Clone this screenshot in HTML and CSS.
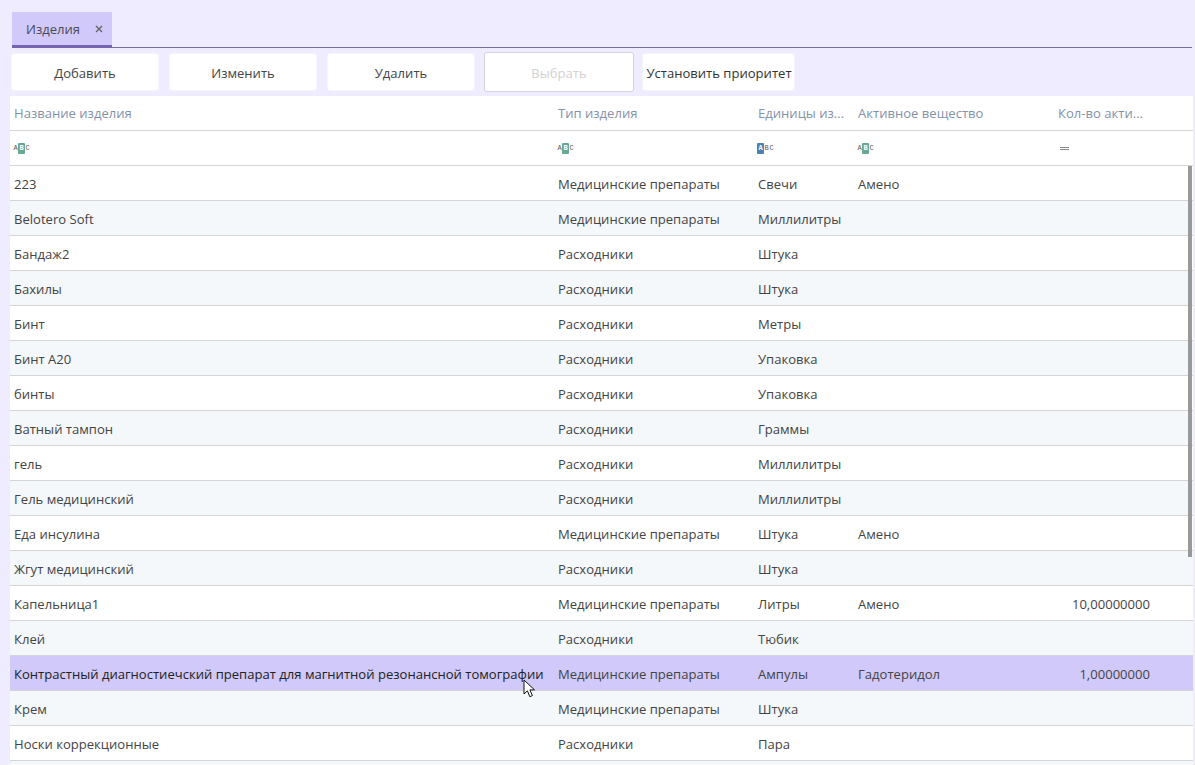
FILE: index.html
```html
<!DOCTYPE html>
<html>
<head>
  <meta charset="utf-8">
  <link rel="stylesheet" href="styles.css">
</head>
<body>
  <div class="tabs">
    <div class="tab">
      <span>Изделия</span>
      <svg class="tab-close" width="8" height="8" viewBox="0 0 8 8"><path d="M1 1l6 6M7 1l-6 6"/></svg>
    </div>
  </div>

  <div class="toolbar">
    <button class="btn">Добавить</button>
    <button class="btn">Изменить</button>
    <button class="btn">Удалить</button>
    <button class="btn btn-disabled">Выбрать</button>
    <button class="btn btn-wide">Установить приоритет</button>
  </div>

  <div class="grid">
    <div class="row head">
      <div class="cell">Название изделия</div>
      <div class="cell">Тип изделия</div>
      <div class="cell">Единицы из...</div>
      <div class="cell">Активное вещество</div>
      <div class="cell">Кол-во акти...</div>
    </div>
    <div class="row filter">
      <div class="cell"><span class="abc"><i>A</i><b class="green">B</b><i>C</i></span></div>
      <div class="cell"><span class="abc"><i>A</i><b class="green">B</b><i>C</i></span></div>
      <div class="cell"><span class="abc"><b class="blue">A</b><i>B</i><i>C</i></span></div>
      <div class="cell"><span class="abc"><i>A</i><b class="green">B</b><i>C</i></span></div>
      <div class="cell"><span class="equals"></span></div>
    </div>

    <div class="row"><div class="cell">223</div><div class="cell">Медицинские препараты</div><div class="cell">Свечи</div><div class="cell">Амено</div><div class="cell num"></div></div>
    <div class="row"><div class="cell">Belotero Soft</div><div class="cell">Медицинские препараты</div><div class="cell">Миллилитры</div><div class="cell"></div><div class="cell num"></div></div>
    <div class="row"><div class="cell">Бандаж2</div><div class="cell">Расходники</div><div class="cell">Штука</div><div class="cell"></div><div class="cell num"></div></div>
    <div class="row"><div class="cell">Бахилы</div><div class="cell">Расходники</div><div class="cell">Штука</div><div class="cell"></div><div class="cell num"></div></div>
    <div class="row"><div class="cell">Бинт</div><div class="cell">Расходники</div><div class="cell">Метры</div><div class="cell"></div><div class="cell num"></div></div>
    <div class="row"><div class="cell">Бинт А20</div><div class="cell">Расходники</div><div class="cell">Упаковка</div><div class="cell"></div><div class="cell num"></div></div>
    <div class="row"><div class="cell">бинты</div><div class="cell">Расходники</div><div class="cell">Упаковка</div><div class="cell"></div><div class="cell num"></div></div>
    <div class="row"><div class="cell">Ватный тампон</div><div class="cell">Расходники</div><div class="cell">Граммы</div><div class="cell"></div><div class="cell num"></div></div>
    <div class="row"><div class="cell">гель</div><div class="cell">Расходники</div><div class="cell">Миллилитры</div><div class="cell"></div><div class="cell num"></div></div>
    <div class="row"><div class="cell">Гель медицинский</div><div class="cell">Расходники</div><div class="cell">Миллилитры</div><div class="cell"></div><div class="cell num"></div></div>
    <div class="row"><div class="cell">Еда инсулина</div><div class="cell">Медицинские препараты</div><div class="cell">Штука</div><div class="cell">Амено</div><div class="cell num"></div></div>
    <div class="row"><div class="cell">Жгут медицинский</div><div class="cell">Расходники</div><div class="cell">Штука</div><div class="cell"></div><div class="cell num"></div></div>
    <div class="row"><div class="cell">Капельница1</div><div class="cell">Медицинские препараты</div><div class="cell">Литры</div><div class="cell">Амено</div><div class="cell num">10,00000000</div></div>
    <div class="row"><div class="cell">Клей</div><div class="cell">Расходники</div><div class="cell">Тюбик</div><div class="cell"></div><div class="cell num"></div></div>
    <div class="row selected"><div class="cell name-dark">Контрастный диагностиечский препарат для магнитной резонансной томографии</div><div class="cell">Медицинские препараты</div><div class="cell">Ампулы</div><div class="cell">Гадотеридол</div><div class="cell num">1,00000000</div></div>
    <div class="row"><div class="cell">Крем</div><div class="cell">Медицинские препараты</div><div class="cell">Штука</div><div class="cell"></div><div class="cell num"></div></div>
    <div class="row"><div class="cell">Носки коррекционные</div><div class="cell">Расходники</div><div class="cell">Пара</div><div class="cell"></div><div class="cell num"></div></div>
    <div class="row"><div class="cell"></div><div class="cell"></div><div class="cell"></div><div class="cell"></div><div class="cell num"></div></div>

    <div class="scrollbar"></div>
  </div>

  <svg class="cursor" width="14" height="20" viewBox="0 0 14 20">
    <path d="M1 1v14l3.4-3.2 2.4 5.9 2.6-1.1-2.5-5.7h4.6z" fill="#fff" stroke="#111" stroke-width="1"/>
  </svg>
</body>
</html>
```

FILE: styles.css
```css
html, body {
  height: 100%;
}

body {
  margin: 0;
  height: 765px;
  overflow: hidden;
  position: relative;
  background-color: #eeecfe;
  font-family: "Open Sans", "Noto Sans", sans-serif;
  font-size: 13.07px;
  color: #444;
}

.tabs {
  margin: 12px 3px 0 12px;
  height: 36px;
  box-sizing: border-box;
  border-bottom: 1px solid #7a6ca8;
  display: flex;
}

.tab {
  width: 100px;
  height: 36px;
  box-sizing: border-box;
  padding: 1px 9px 0 14px;
  background-color: #d0c9fa;
  border-bottom: 3px solid #7564ae;
  display: flex;
  align-items: center;
  justify-content: space-between;
  color: #4a4a55;
}

.tab-close path {
  stroke: #666;
  stroke-width: 1.4;
  fill: none;
}

.toolbar {
  display: flex;
  margin: 5px 0 0 11px;
  height: 38px;
}

.btn {
  width: 148px;
  height: 38px;
  margin-right: 10px;
  padding: 1px 0 0;
  border: 1px solid #f6f5fe;
  border-radius: 3px;
  background-color: #fff;
  font-family: inherit;
  font-size: 13.07px;
  color: #444;
}

.btn-disabled {
  width: 150px;
  height: 40px;
  margin: -1px 8px 0 -1px;
  border-color: #d4d2de;
  color: #d2d2d2;
}

.btn-wide {
  width: 153px;
  margin-right: 0;
  padding-left: 1px;
  color: #333;
}

.grid {
  position: relative;
  margin: 5px 2px 0 10px;
  background-color: #fff;
}

.row {
  display: grid;
  grid-template-columns: 544px 200px 100px 200px 100px 1fr;
  height: 35px;
  box-sizing: border-box;
  border-bottom: 1px solid #d5d5d5;
  align-items: center;
}

.row:nth-child(even) {
  background-color: #f4f8fb;
}

.row.head,
.row.filter {
  background-color: #fff;
}

.head {
  color: #8492a9;
}

.row.selected {
  background-color: #d0c9fa;
}

.name-dark {
  color: #222;
}

.cell {
  padding: 2px 4px 0;
  white-space: nowrap;
}

.head .cell {
  padding-top: 0;
}

.filter .cell {
  padding-top: 0;
}

.num {
  text-align: right;
}

.abc {
  display: flex;
  align-items: center;
  height: 10px;
  margin-left: -1px;
  font-family: "Liberation Mono", monospace;
  font-size: 7px;
  line-height: 10px;
}

.abc i {
  font-style: normal;
  width: 5px;
  text-align: center;
  color: #555;
}

.abc b {
  width: 7px;
  height: 11px;
  text-align: center;
  color: #fff;
  border-radius: 1px;
}

.abc .green {
  background-color: #68a896;
}

.abc .blue {
  background-color: #4c80b8;
}

.equals {
  display: block;
  width: 9px;
  height: 1px;
  margin-left: 2px;
  border-top: 1px solid #888;
  border-bottom: 1px solid #888;
}

.scrollbar {
  position: absolute;
  left: 1178px;
  top: 70px;
  width: 4px;
  height: 391px;
  background-color: #999;
}

.cursor {
  position: absolute;
  left: 523px;
  top: 679px;
}
```
